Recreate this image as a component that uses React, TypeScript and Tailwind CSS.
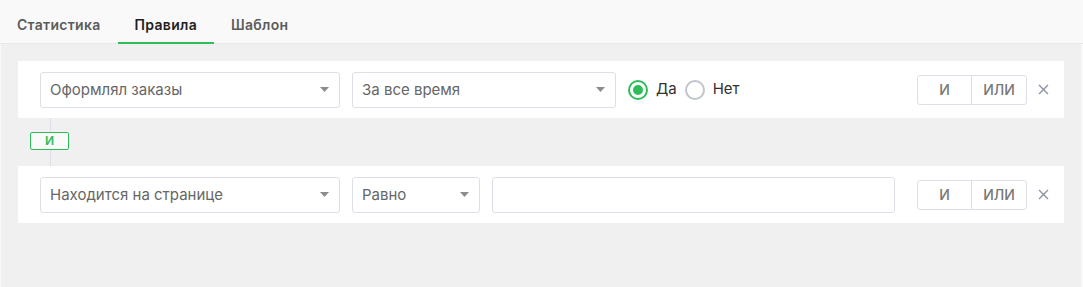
import React from 'react';

function Caret() {
    return (
        <svg width="9" height="5" viewBox="0 0 9 5" className="shrink-0">
            <path d="M0 0h9L4.5 5z" fill="#8c8c8c" />
        </svg>
    );
}

function Select({ label, className }: { label: string; className: string }) {
    return (
        <div
            className={`h-[36px] flex items-center justify-between pl-[9px] pr-[10px] bg-white border border-[#dcdfe6] rounded-[3px] text-[15px] text-[#666666] ${className}`}
        >
            <span className="pt-px">{label}</span>
            <Caret />
        </div>
    );
}

function Radio({ checked, label }: { checked?: boolean; label: string }) {
    return (
        <div className="flex items-center gap-[8px]">
            {checked ? (
                <span className="w-[20px] h-[20px] rounded-full border-2 border-[#2ebd59] flex items-center justify-center">
                    <span className="w-[10px] h-[10px] rounded-full bg-[#2ebd59]" />
                </span>
            ) : (
                <span className="w-[20px] h-[20px] rounded-full border-2 border-[#c0c4cc]" />
            )}
            <span className="text-[15px] text-[#303133]">{label}</span>
        </div>
    );
}

function LogicButtons() {
    return (
        <div className="ml-auto flex items-center">
            <div className="flex h-[30px] border border-[#dcdfe6] rounded-[3px] text-[14px] font-medium text-[#777777]">
                <span className="w-[53px] flex items-center justify-center">И</span>
                <span className="w-[55px] flex items-center justify-center border-l border-[#dcdfe6]">ИЛИ</span>
            </div>
            <svg width="11" height="11" viewBox="0 0 11 11" className="ml-[11px] mr-[15px]">
                <path d="M1 1l9 9M10 1l-9 9" stroke="#8a93a0" strokeWidth="1.4" />
            </svg>
        </div>
    );
}

export default function App() {
    return (
        <div className="w-[1083px] h-[287px] flex flex-col bg-[#f9f9f9] font-['Inter',sans-serif]">
            {/* Tabs */}
            <div className="h-[44px] flex items-end pl-[17px] border-b border-[#e8e8e8] text-[14px] font-semibold tracking-[0.3px]">
                <div className="h-full flex items-center text-[#5c5c5c] pt-[6px]">Статистика</div>
                <div className="h-full flex items-center ml-[17px] px-[17px] pt-[6px] text-[#1f1f1f] border-b-2 border-[#2ebd59] -mb-px">
                    Правила
                </div>
                <div className="h-full flex items-center ml-[17px] pt-[6px] text-[#5c5c5c]">Шаблон</div>
            </div>

            {/* Rules */}
            <div className="flex-1 mx-px mr-[2px] bg-[#f0f0f0] pt-[17px] pl-[17px] pr-[17px]">
                <div className="h-[57px] bg-white flex items-center pl-[22px]">
                    <Select label="Оформлял заказы" className="w-[300px]" />
                    <Select label="За все время" className="w-[264px] ml-[12px]" />
                    <div className="flex items-center gap-[8px] ml-[12px]">
                        <Radio checked label="Да" />
                        <Radio label="Нет" />
                    </div>
                    <LogicButtons />
                </div>

                <div className="h-[48px] relative">
                    <div className="absolute left-[32px] top-0 bottom-0 w-px bg-[#dcdfe6]" />
                    <div className="absolute left-[12px] top-[14px] w-[39px] h-[18px] border border-[#2ebd59] rounded-[2px] bg-[#fafafa] flex items-center justify-center text-[12px] font-semibold text-[#2ebd59]">
                        И
                    </div>
                </div>

                <div className="h-[57px] bg-white flex items-center pl-[22px]">
                    <Select label="Находится на странице" className="w-[300px]" />
                    <Select label="Равно" className="w-[128px] ml-[12px]" />
                    <div className="w-[403px] h-[36px] ml-[12px] border border-[#dcdfe6] rounded-[3px] bg-white" />
                    <LogicButtons />
                </div>
            </div>
        </div>
    );
}
